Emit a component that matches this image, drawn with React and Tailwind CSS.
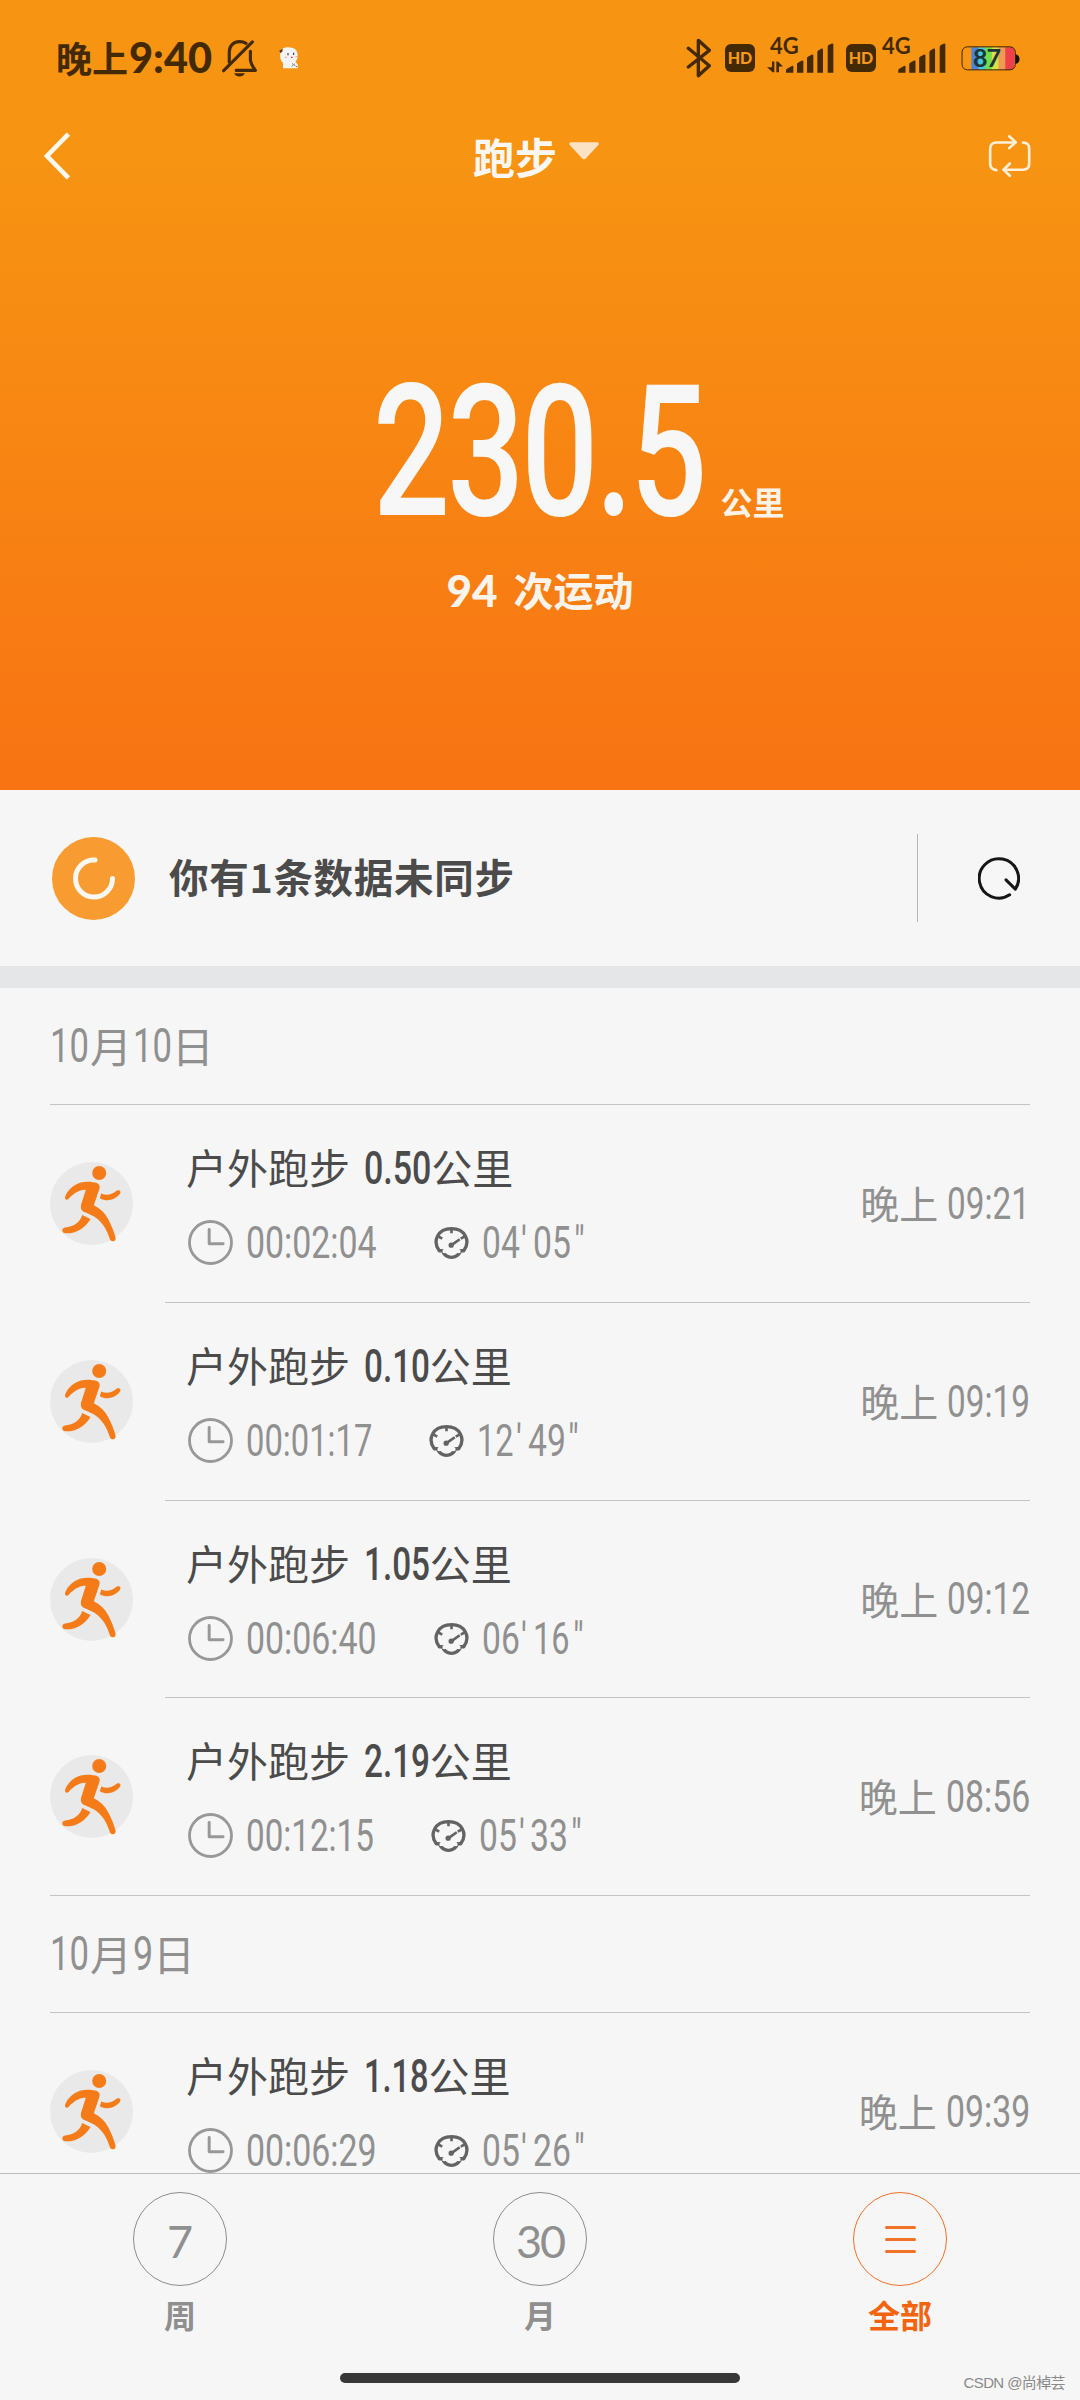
import { clsx } from 'clsx';

const groups = [
  {
    date: ['10', '月', '10', '日'],
    runs: [
      { km: '0.50', time: '00:02:04', pace: ['04', '05'], at: '09:21', h: 'h-[198px]' },
      { km: '0.10', time: '00:01:17', pace: ['12', '49'], at: '09:19', h: 'h-[198px]' },
      { km: '1.05', time: '00:06:40', pace: ['06', '16'], at: '09:12', h: 'h-[197px]' },
      { km: '2.19', time: '00:12:15', pace: ['05', '33'], at: '08:56', h: 'h-[198px]' },
    ],
  },
  {
    date: ['10', '月', '9', '日'],
    runs: [{ km: '1.18', time: '00:06:29', pace: ['05', '26'], at: '09:39', h: 'h-[198px]' }],
  },
];

// Roboto advances in em, used to squeeze the digits into a condensed face
const natural = { ':': 0.2422, '.': 0.2632, "'": 0.1743, '"': 0.3198 };
const condensed = { 1: 0.39, 7: 0.385, ':': 0.19, '.': 0.18, "'": 0.13, '"': 0.24 };

function Num({ children, className }) {
  const chars = [...children];
  const from = chars.reduce((sum, c) => sum + (natural[c] ?? 0.5615), 0);
  const to = chars.reduce((sum, c) => sum + (condensed[c] ?? 0.42), 0);
  return (
    <span
      className={clsx('inline-block whitespace-nowrap font-[Roboto,sans-serif]', className)}
      style={{ width: `${to}em` }}
    >
      <span className="inline-block origin-left" style={{ transform: `scaleX(${to / from})` }}>
        {children}
      </span>
    </span>
  );
}

function MutedBell() {
  return (
    <svg viewBox="0 0 104 112" className="w-[35px] h-[37px]" fill="none" stroke="#432a05" strokeWidth="9.500" strokeLinecap="round" strokeLinejoin="round">
      <path d="M21 67V36C21 17 35 5 52 5c9 0 15 2 20 5" />
      <path d="M91 6 4 93" />
      <path d="M85 34v27c2 13 8 20 15 31H42" />
      <path d="M36 101h32c-4 13-28 13-32 0Z" fill="#432a05" stroke="none" />
    </svg>
  );
}

function Puppy() {
  return (
    <svg viewBox="0 0 60 66" className="w-5 h-[22px]">
      <path d="M12 4C22-2 44 0 51 9c7 10 7 28-2 35l7 8v12H12V48C0 38 1 14 12 4Z" fill="#f5f4f4" />
      <path d="M1 11 11 5l-1 9-6 4Z" fill="#4b3428" />
      <path d="M27 18v7M44 17v7" stroke="#222" strokeWidth="3" />
      <path d="M36 31h5" stroke="#d34" strokeWidth="4" />
      <path d="M17 31h6M49 29h6" stroke="#f7a5a5" strokeWidth="4" />
      <path d="m40 50 14 10M38 58l10-8" stroke="#555" strokeWidth="3" strokeDasharray="4 3" />
    </svg>
  );
}

function Bluetooth() {
  return (
    <svg viewBox="78 110 78 120" className="w-[26px] h-10" fill="none" stroke="#432a05" strokeWidth="10" strokeLinejoin="round" strokeLinecap="round">
      <path d="m85 141 63 52-33 30V117l33 30-63 50" />
    </svg>
  );
}

function HdBadge({ className }) {
  return (
    <span className={clsx('flex items-center justify-center w-[30px] h-7 rounded-[6px] bg-[#432a05] text-[#f79a1c] text-[16px] leading-none font-black font-[Lato,sans-serif]', className)}>
      HD
    </span>
  );
}

function Signal({ data, className }) {
  return (
    <div className={clsx('grid', data ? 'w-[67px]' : 'w-16', className)}>
      <span className={clsx('col-start-1 row-start-1 -mt-[5px] h-[28px] text-[22px] leading-[28px] font-bold font-[Lato,sans-serif]', data && 'ml-[3px]')}>4G</span>
      <svg viewBox={data ? '322 110 201 110' : '330 110 193 110'} className="col-start-1 row-start-1 w-full h-[37px]" fill="#432a05">
        {data && <path d="M337 183h7v32h-5l-17-15h15ZM350 215v-32h5l15 15h-12v17Z" />}
        <path d="M379 217v-7q0-4 4-6l15-8q3-1 3 3v18ZM412 217v-25q0-4 4-6l11-6q4-1 4 3v34ZM442 217v-43q0-4 4-6l11-6q4-1 4 3v52ZM473 217v-62q0-4 4-6l9-5q4-1 4 3v70ZM504 217v-78q0-4 4-6l9-4q4-1 4 3v85Z" />
      </svg>
    </div>
  );
}

function Battery() {
  return (
    <div className="grid w-[59px]">
      <svg viewBox="902 138 178 76" className="col-start-1 row-start-1 self-center w-[59px] h-[25px]">
        <path d="M933 142h22v68h-22Z" fill="#4a83dc" />
        <path d="M955 142h20v68h-20Z" fill="#3fcbe6" />
        <path d="M975 142h20v68h-20Z" fill="#6fe04c" />
        <path d="M995 142h21v68h-21Z" fill="#d8e04a" />
        <path d="M1016 142h20v68h-20Z" fill="#ee9a55" />
        <path d="M1036 142h16q12 0 12 12v44q0 12-12 12h-16Z" fill="#ec4149" />
        <rect x="904.500" y="140.500" width="162" height="70" rx="16" fill="none" stroke="#3a2404" strokeWidth="3" />
        <path d="M1067 163q12 3 12 15t-12 15Z" fill="#1a1002" />
      </svg>
      <span className="relative col-start-1 row-start-1 self-center ml-[12px] mb-[2px] text-[25px] leading-[32px] font-bold font-[Lato,sans-serif] text-[#1d3534] tracking-[-1px]">87</span>
    </div>
  );
}

function StatusBar() {
  return (
    <div className="flex items-center h-[116px] pl-[56px] pr-[60px] text-[#432a05]">
      <div className="flex items-center">
        <span className="w-[73px] mb-[3px] text-[36px] leading-none font-bold whitespace-nowrap">晚上</span>
        <span className="w-[85px] text-[41.500px] leading-none font-black whitespace-nowrap font-[Lato,sans-serif]">9:40</span>
      </div>
      <div className="ml-[8px]"><MutedBell /></div>
      <div className="ml-[22px]"><Puppy /></div>
      <div className="flex items-center ml-auto">
        <Bluetooth />
        <HdBadge className="ml-[13px]" />
        <Signal data className="ml-[12px] mb-[6px]" />
        <HdBadge className="ml-[12px]" />
        <Signal className="ml-[6px] mb-[6px]" />
        <div className="ml-[15px]"><Battery /></div>
      </div>
    </div>
  );
}

function TitleBar() {
  return (
    <div className="flex items-center justify-between h-[80px] pl-[44px] pr-[49px]">
      <svg viewBox="0 0 78 144" className="w-[26px] h-[48px]" fill="none" stroke="#fbf6ee" strokeWidth="14">
        <path d="M73 6 9 72l64 66" />
      </svg>
      <div className="flex items-center ml-[14px]">
        <span className="text-[42px] leading-none font-bold text-[#faf7f2]">跑步</span>
        <svg viewBox="0 0 90 54" className="w-[30px] h-[18px] ml-[12px] mb-[11px]">
          <path d="M5 1h80q7 2 3 8L51 49q-6 6-12 0L2 9Q-1 3 5 1Z" fill="#fbe2c2" />
        </svg>
      </div>
      <svg viewBox="982 404 130 128" className="w-[43px] h-[42px]" fill="none" stroke="#fdf0da" strokeWidth="8" strokeLinecap="round" strokeLinejoin="round">
        <path d="M1007 511q-19-2-19-20v-45q0-19 20-19h57" />
        <path d="m1046 408 20 18-20 18" />
        <path d="M1088 427q19 1 19 19v45q0 19-19 19h-58" />
        <path d="m1048 491-19 19 19 18" />
      </svg>
    </div>
  );
}

function Summary() {
  return (
    <header className="h-[790px] bg-linear-to-b from-[#f79412] from-20% to-[#f87313]">
      <StatusBar />
      <TitleBar />
      <div className="flex items-end pl-[373px] pt-[181px]">
        <Num className="text-[183px] leading-[152px] tracking-[-4px] font-medium text-[#f7f7f7]">230.5</Num>
        <span className="mb-[10px] ml-[7px] text-[32px] leading-[36px] font-bold text-[#fbf3e8]">公里</span>
      </div>
      <div className="flex items-center justify-center mt-[35px] text-[#fbf4ec] font-bold">
        <span className="text-[44px] leading-[48px] mt-[2px] font-black font-[Lato,sans-serif]">94</span>
        <span className="ml-[16px] text-[40px] leading-[48px]">次运动</span>
      </div>
    </header>
  );
}

function SyncNotice() {
  return (
    <div className="flex items-center h-[176px] pl-[52px] pr-[60px]">
      <svg viewBox="0 0 83 83" className="w-[83px] h-[83px]">
        <circle cx="41.500" cy="41.500" r="41.500" fill="#f89b31" />
        <path d="M43 23a18.500 18.500 0 1 0 17.500 18.500" fill="none" stroke="#fbf8f3" strokeWidth="5" strokeLinecap="round" />
      </svg>
      <span className="ml-[34px] mb-[4px] text-[39.500px] leading-none tracking-[0.7px] font-bold text-[#4b4b4b]">你有1条数据未同步</span>
      <span className="ml-auto w-px h-[88px] bg-[#b5b5b5]" />
      <svg viewBox="354 230 126 128" className="ml-[60px] w-[42px] h-[43px]" fill="none" stroke="#161616" strokeWidth="9" strokeLinecap="round" strokeLinejoin="round">
        <path d="M449 343a59 59 0 1 1 17-17l-28-28" />
      </svg>
    </div>
  );
}

function Runner() {
  return (
    <svg viewBox="31 36 248 248" className="w-[83px] h-[83px]" fill="#f57b18">
      <circle cx="155" cy="160" r="124" fill="#e9e9e9" />
      <circle cx="178" cy="69" r="21" />
      <path d="M76 140c7-20 25-37 47-43 17-4 38-2 48 2 7 3 10 9 8 16l-17 50c20 10 34 24 43 42 9 17 18 39 22 55 2 12-13 15-17 5-7-24-19-46-37-61-13-11-29-15-43-22-7-5-8-13-6-21l14-44c-20-1-39 13-51 27-6 6-13 1-11-6Z" />
      <path d="m184 130-4 14c21 12 46 5 60-13 5-8-3-13-10-9-15 12-30 15-46 8Z" />
      <path d="m127 194 25 12c-16 28-43 44-75 43-10 0-14-14-1-17 25-4 45-15 51-38Z" />
    </svg>
  );
}

function ClockIcon() {
  return (
    <svg viewBox="445 211 136 136" className="w-[45px] h-[45px]" fill="none" stroke="#989898">
      <circle cx="513" cy="279" r="63.500" strokeWidth="8.500" />
      <path d="M509 240v43h42" strokeWidth="9" strokeLinecap="round" strokeLinejoin="round" />
    </svg>
  );
}

function PaceIcon() {
  return (
    <svg viewBox="42 82 106 101" className="w-[35px] h-[34px]" fill="none" stroke="#636363" strokeWidth="10" strokeLinejoin="round">
      <path d="M67 156h-9C36 126 54 89 95 89s59 37 37 67h-9c-6 13-16 20-28 20s-22-7-28-20Z" strokeDasharray="0" />
      <path d="M68 158h54" stroke="#f6f6f6" />
      <path d="M95 90v13M54 112l13 7M136 112l-13 7" strokeWidth="8" />
      <path d="m95 139 25-18" strokeWidth="8" />
      <circle cx="94" cy="139" r="8" fill="#636363" stroke="none" />
    </svg>
  );
}

function RunRow({ run, last }) {
  return (
    <div className={clsx('flex px-[50px]', run.h)}>
      <div className="w-[115px] pt-[57px]">
        <Runner />
      </div>
      <div className={clsx('flex flex-1 justify-between border-b border-[#c4c4c4]', last && '-ml-[115px] pl-[115px]')}>
        <div className="pl-[21px] pt-[37px]">
          <div className="flex items-center h-[48px] text-[41px] leading-[48px] text-[#4b4b4b]">
            <span>户外跑步</span>
            <Num className="ml-[14px] mt-[3px] text-[46px] font-medium">{run.km}</Num>
            <span className="ml-[1px]">公里</span>
          </div>
          <div className="flex items-center mt-[30px] pl-[2px] h-[45px] text-[45px] leading-[38px] text-[#909090]">
            <ClockIcon />
            <Num className="ml-[13px]">{run.time}</Num>
            <div className="ml-[57px]"><PaceIcon /></div>
            <Num className="ml-[13px] mr-[2px]">{run.pace[0]}</Num>
            <Num>{"'"}</Num>
            <Num className="ml-[6px] mr-[3px]">{run.pace[1]}</Num>
            <Num>{'"'}</Num>
          </div>
        </div>
        <div className="flex items-center text-[39px] text-[#909090]">
          <span className="mb-[2px]">晚上</span>
          <Num className="ml-[9px] text-[45px]">{run.at}</Num>
        </div>
      </div>
    </div>
  );
}

function DateHeader({ parts }) {
  return (
    <div className="flex items-center h-[117px] mx-[50px] border-b border-[#c4c4c4] text-[42px] text-[#909090]">
      <Num className="text-[48px]">{parts[0]}</Num>
      <span className="mb-[3px] ml-[1px]">{parts[1]}</span>
      <Num className="text-[48px] ml-[1px]">{parts[2]}</Num>
      <span className="mb-[3px]">{parts[3]}</span>
    </div>
  );
}

function Tab({ label, active, children }) {
  return (
    <div className={clsx('flex flex-1 flex-col items-center', active ? 'text-[#f3640f]' : 'text-[#8f8f8f]')}>
      <div className={clsx('flex items-center justify-center w-[94px] h-[94px] rounded-full border-[1.500px]', active ? 'border-[#ee7128]' : 'border-[#8c8c8c]')}>
        {children}
      </div>
      <span className="mt-[10px] text-[32px] leading-[36px] font-bold">{label}</span>
    </div>
  );
}

export default function App() {
  return (
    <div className="relative flex flex-col w-[1080px] h-[2400px] overflow-hidden bg-[#f6f6f6] font-['Noto_Sans_CJK_SC',sans-serif]" lang="zh-CN">
      <Summary />
      <SyncNotice />
      <div className="h-[22px] bg-[#e4e6e8]" />
      <main className="h-[1185px] overflow-hidden">
        {groups.map((group) => (
          <section key={group.date.join('')}>
            <DateHeader parts={group.date} />
            {group.runs.map((run, i) => (
              <RunRow key={run.at} run={run} last={i === group.runs.length - 1} />
            ))}
          </section>
        ))}
      </main>
      <nav className="flex flex-1 pt-[18px] border-t border-[#bcbcbc]">
        <Tab label="周">
          <span className="mt-[4px] font-[Lato,sans-serif] text-[45px] leading-none">7</span>
        </Tab>
        <Tab label="月">
          <span className="mt-[4px] font-[Lato,sans-serif] text-[45px] leading-none tracking-[-2px]">30</span>
        </Tab>
        <Tab label="全部" active>
          <span className="flex flex-col gap-[9px]">
            <span className="w-[31px] h-[3px] rounded-full bg-[#f07328]" />
            <span className="w-[31px] h-[3px] rounded-full bg-[#f07328]" />
            <span className="w-[31px] h-[3px] rounded-full bg-[#f07328]" />
          </span>
        </Tab>
      </nav>
      <div className="absolute left-[340px] bottom-[17px] w-[400px] h-[10px] rounded-full bg-[#383838]" />
      <span className="absolute right-[15px] bottom-[7px] text-[15px] leading-[20px] tracking-[-0.6px] text-[#8a8a8a] font-['Liberation_Sans','Noto_Sans_CJK_SC',sans-serif]">
        CSDN @尚棹芸
      </span>
    </div>
  );
}
